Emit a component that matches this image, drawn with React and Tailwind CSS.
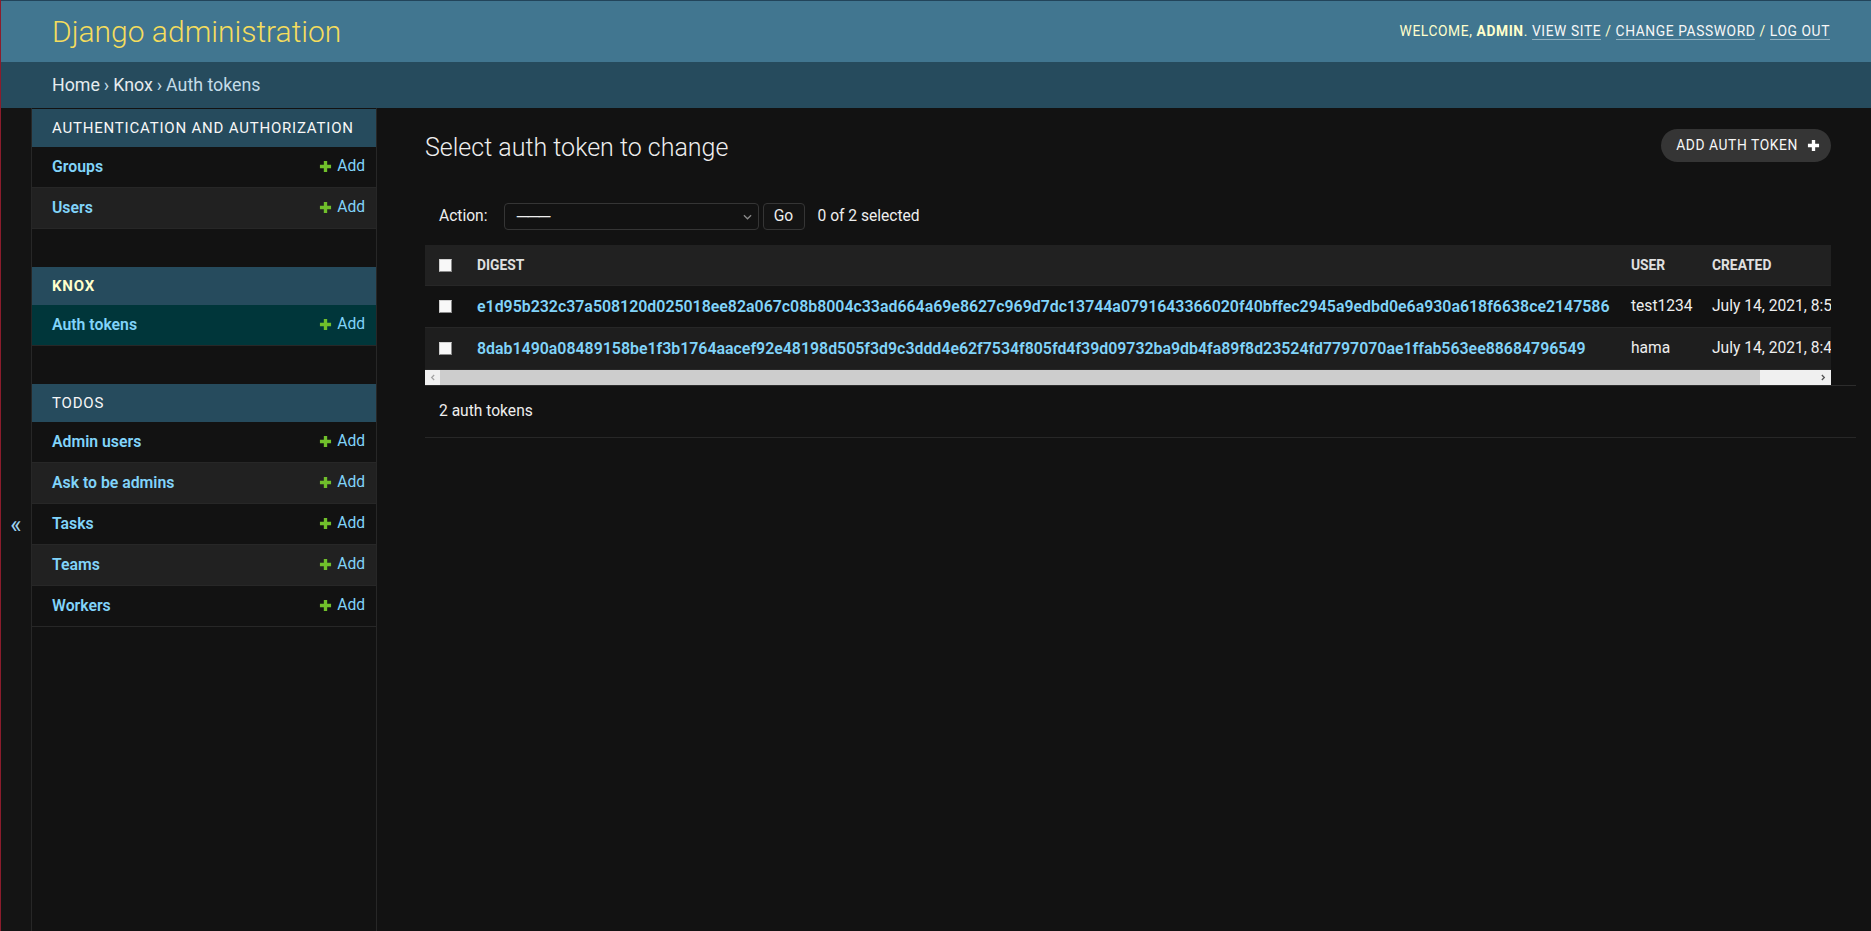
import React from "react";

const Plus = ({ className }) => (
  <svg viewBox="0 0 14 14" className={className} aria-hidden="true">
    <path d="M5.2 1h3.6v4.2H13v3.6H8.8V13H5.2V8.8H1V5.2h4.2z" fill="currentColor" />
  </svg>
);

const Check = () => (
  <div className="w-[13px] h-[13px] bg-[#f8f8f8] border border-[#d0d0d0] border-r-[#8a8a8a] border-b-[#8a8a8a]" />
);

function Module({ title, current, items }) {
  return (
    <div className="mb-[38px]">
      <div
        className={`h-[38px] flex items-center pl-[20px] bg-[#264b5d] text-[15px] tracking-[0.8px] uppercase ${
          current ? "font-bold text-[#ffffcc]" : "font-normal text-[#f7f7f7]"
        }`}
      >
        {title}
      </div>
      {items.map((it, i) => (
        <div
          key={it}
          className={`h-[41px] flex items-center justify-between border-b border-[#272727] pl-[20px] pr-[11px] ${
            current ? "bg-[#00363a]" : i % 2 ? "bg-[#212121]" : "bg-[#121212]"
          }`}
        >
          <span className="text-[15.8px] font-semibold text-[#81d4fa]">{it}</span>
          <span className="flex items-center gap-[5px] text-[15.6px] text-[#81d4fa]">
            <Plus className="w-[13px] h-[13px] text-[#70bf2b]" />
            Add
          </span>
        </div>
      ))}
    </div>
  );
}

const rows = [
  {
    digest:
      "e1d95b232c37a508120d025018ee82a067c08b8004c33ad664a69e8627c969d7dc13744a0791643366020f40bffec2945a9edbd0e6a930a618f6638ce2147586",
    user: "test1234",
    created: "July 14, 2021, 8:53 a.m.",
  },
  {
    digest:
      "8dab1490a08489158be1f3b1764aacef92e48198d505f3d9c3ddd4e62f7534f805fd4f39d09732ba9db4fa89f8d23524fd7797070ae1ffab563ee88684796549",
    user: "hama",
    created: "July 14, 2021, 8:47 a.m.",
  },
];

export default function App() {
  return (
    <div className="min-h-screen flex flex-col bg-[#121212] border-l border-[#8b1c2c] font-[Roboto,sans-serif] text-[#eeeeee]">
      <header className="h-[62px] flex-none bg-[#417690] border-t border-[#22445a] flex items-center justify-between pl-[51px] pr-[41px]">
        <div className="text-[30px] font-light leading-none text-[#f5dd5d]">Django administration</div>
        <div className="text-[13.8px] tracking-[0.6px] uppercase text-[#ffffcc]">
          Welcome, <strong className="font-bold">admin</strong>.{" "}
          <span className="text-[#f7f7f7] border-b border-[#8fb0c0]">View site</span> /{" "}
          <span className="text-[#f7f7f7] border-b border-[#8fb0c0]">Change password</span> /{" "}
          <span className="text-[#f7f7f7] border-b border-[#8fb0c0]">Log out</span>
        </div>
      </header>

      <div className="h-[46px] flex-none bg-[#264b5d] flex items-center pl-[51px] text-[17.8px] text-[#c4dce8]">
        <span className="text-[#e6ecef]">Home</span>
        <span className="mx-[4px]">›</span>
        <span className="text-[#e6ecef]">Knox</span>
        <span className="mx-[4px]">›</span>
        <span>Auth tokens</span>
      </div>

      <div className="flex-1 flex">
        <div className="w-[31px] flex-none border-r border-[#272727] bg-[#141414] flex items-center justify-center pt-[10px]">
          <span className="text-[24px] leading-none text-[#9fd3f0]">«</span>
        </div>

        <nav className="w-[345px] flex-none border-r border-[#272727] pt-px">
          <Module title="Authentication and Authorization" items={["Groups", "Users"]} />
          <Module title="Knox" current items={["Auth tokens"]} />
          <Module title="Todos" items={["Admin users", "Ask to be admins", "Tasks", "Teams", "Workers"]} />
        </nav>

        <main className="flex-1 min-w-0 pl-[48px] pr-[15px]">
          <div className="flex items-start justify-between pt-[21px] mr-[25px]">
            <h1 className="mt-[4px] text-[25px] leading-[30px] font-light text-[#eeeeee]">
              Select auth token to change
            </h1>
            <div className="h-[33px] rounded-full bg-[#353535] flex items-center pl-[15px] pr-[11px] gap-[9px] text-[13.8px] tracking-[0.6px] uppercase text-[#f7f7f7]">
              Add auth token
              <Plus className="w-[13px] h-[13px] text-white" />
            </div>
          </div>

          <div className="mt-[40px] h-[27px] flex items-center text-[15.6px] text-[#eeeeee]">
            <span className="pl-[14px]">Action:</span>
            <div className="ml-[16px] w-[255px] h-[27px] border border-[#353535] rounded-[4px] bg-[#121212] flex items-center justify-between pl-[11px] pr-[6px]">
              <span className="leading-none text-[18px] tracking-[-3px]">———</span>
              <svg viewBox="0 0 10 6" className="w-[9px] h-[6px]" aria-hidden="true">
                <path d="M1 1l4 4 4-4" fill="none" stroke="#8a8a8a" strokeWidth="1.4" />
              </svg>
            </div>
            <div className="ml-[4px] w-[42px] h-[27px] border border-[#353535] rounded-[4px] bg-[#141414] flex items-center justify-center">
              Go
            </div>
            <span className="ml-[13px]">0 of 2 selected</span>
          </div>

          <div className="mt-[15px] border-b border-[#2c2c2c]">
            <div className="mr-[25px] overflow-hidden">
              <div className="flex items-center h-[41px] border-b border-[#272727] bg-[#212121] whitespace-nowrap text-[13.8px] font-bold uppercase text-[#e0e0e0]">
                <div className="w-[41px] flex-none pl-[14px]">
                  <Check />
                </div>
                <div className="w-[1154px] flex-none pl-[11px]">Digest</div>
                <div className="w-[81px] flex-none pl-[11px]">User</div>
                <div className="flex-none pl-[11px]">Created</div>
              </div>
              {rows.map((r, i) => (
                <div
                  key={r.user}
                  className={`flex items-center h-[42px] border-b border-[#272727] whitespace-nowrap text-[15.6px] ${
                    i % 2 ? "bg-[#1e1e1e]" : "bg-[#121212]"
                  }`}
                >
                  <div className="w-[41px] flex-none pl-[14px]">
                    <Check />
                  </div>
                  <div className="w-[1154px] flex-none pl-[11px] overflow-hidden text-[15.9px] font-semibold text-[#81d4fa]">
                    {r.digest}
                  </div>
                  <div className="w-[81px] flex-none pl-[11px] text-[#eeeeee]">{r.user}</div>
                  <div className="flex-none pl-[11px] text-[#eeeeee]">{r.created}</div>
                </div>
              ))}
              <div className="h-[15px] flex bg-[#f0f0f0]">
                <div className="w-[15px] flex-none flex items-center justify-center">
                  <svg viewBox="0 0 6 8" className="w-[5px] h-[7px]" aria-hidden="true">
                    <path d="M5 1L2 4l3 3" fill="none" stroke="#a3a3a3" strokeWidth="1.5" />
                  </svg>
                </div>
                <div className="w-[1320px] flex-none bg-[#cdcdcd]" />
                <div className="flex-1" />
                <div className="w-[15px] flex-none flex items-center justify-center">
                  <svg viewBox="0 0 6 8" className="w-[5px] h-[7px]" aria-hidden="true">
                    <path d="M1 1l3 3-3 3" fill="none" stroke="#505050" strokeWidth="1.5" />
                  </svg>
                </div>
              </div>
            </div>
          </div>

          <div className="h-[52px] flex items-center pl-[14px] border-b border-[#272727] text-[15.6px] text-[#eeeeee]">
            2 auth tokens
          </div>
        </main>
      </div>
    </div>
  );
}
